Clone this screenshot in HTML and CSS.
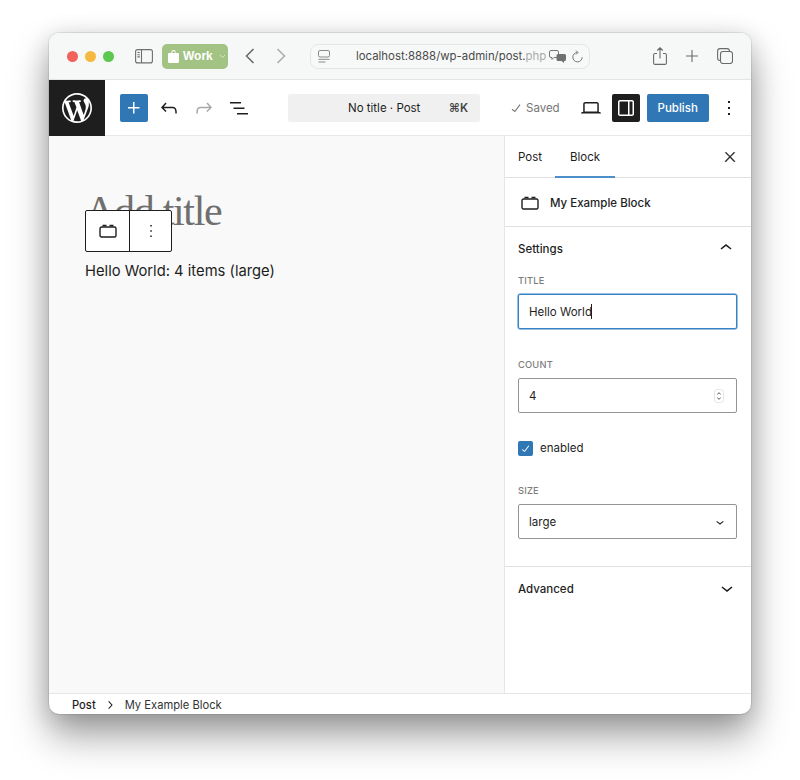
FILE: index.html
```html
<!doctype html>
<html>
<head>
<meta charset="utf-8">
<title>Edit Post</title>
<link rel="stylesheet" href="styles.css">
</head>
<body>
<div id="wrap">
	<div class="chrome">
		<div class="lights"><i class="red"></i><i class="yellow"></i><i class="green"></i></div>
		<svg class="ic-sidebar" width="18" height="15" viewBox="0 0 18 15" fill="none" stroke="#6e6e6e" stroke-width="1.1"><rect x=".6" y=".6" width="16.8" height="13.3" rx="2"/><path d="M6.5.6v13.3M2.4 3.5h2.4M2.4 5.7h2.4M2.4 7.9h2.4"/></svg>
		<div class="work">
			<svg width="11" height="13" viewBox="0 0 11 13"><path d="M3.4 3V2a2.1 2.1 0 014.2 0v1H10a1 1 0 011 1v7.5a1.5 1.5 0 01-1.5 1.5h-8A1.5 1.5 0 010 11.500V4a1 1 0 011-1zm1-.1h2.200V2a1.100 1.100 0 00-2.200 0z" fill="#fff"/></svg>
			<span>Work</span>
			<svg width="7" height="5" viewBox="0 0 7 5" fill="none" stroke="#d5e4c6" stroke-width="1"><path d="M1 1l2.500 2.500L6 1"/></svg>
		</div>
		<svg class="ic-back" width="10" height="16" viewBox="0 0 10 16" fill="none" stroke="#666" stroke-width="1.500"><path d="M8.500 1L1.500 8l7 7"/></svg>
		<svg class="ic-fwd" width="10" height="16" viewBox="0 0 10 16" fill="none" stroke="#a9aaaa" stroke-width="1.500"><path d="M1.500 1l7 7-7 7"/></svg>
		<div class="urlbar">
			<svg width="12" height="13" viewBox="0 0 12 13" fill="none" stroke="#8a8a8a" stroke-width="1"><rect x=".5" y=".5" width="11" height="6.500" rx="1.500"/><path d="M.5 9.300h11M.5 12h7"/></svg>
			<span class="url">localhost:8888/wp-admin/post.<em>php</em></span>
			<svg class="ic-translate" width="17" height="13" viewBox="0 0 17 13"><path d="M2 .5h6a1.500 1.500 0 011.500 1.500v4A1.500 1.500 0 018 7.500H5L3 9.500v-2H2A1.500 1.500 0 01.5 6V2A1.500 1.500 0 012 .5z" fill="none" stroke="#777"/><path d="M9 4h6.500A1.500 1.500 0 0117 5.500v4a1.500 1.500 0 01-1.500 1.500H15v2l-2.500-2H9a1.500 1.500 0 01-1.500-1.500v-4A1.500 1.500 0 019 4z" fill="#6f7070"/></svg>
			<svg width="12" height="13" viewBox="0 0 12 13" fill="none" stroke="#777" stroke-width="1"><path d="M6.500 2.500a4.700 4.700 0 104.700 4.700M5 .5l2 2-2 2"/></svg>
		</div>
		<div class="chrome-right">
			<svg width="14" height="18" viewBox="0 0 14 18" fill="none" stroke="#6a6a6a" stroke-width="1.100"><path d="M4 6.500H2A1.500 1.500 0 00.6 8v8A1.500 1.500 0 002 17.400h10a1.500 1.500 0 001.400-1.400V8A1.500 1.500 0 0012 6.500h-2M7 11.500V1M4.200 3.500L7 .8l2.800 2.700"/></svg>
			<svg width="12" height="12" viewBox="0 0 12 12" fill="none" stroke="#6a6a6a" stroke-width="1.100"><path d="M6 0v12M0 6h12"/></svg>
			<svg width="16" height="16" viewBox="0 0 16 16" fill="none" stroke="#6a6a6a" stroke-width="1.100"><rect x="3.500" y="3.500" width="12" height="12" rx="2.500"/><path d="M12.500 3.500V3A2.500 2.500 0 0010 .6H3A2.500 2.500 0 00.6 3v7A2.500 2.500 0 003 12.500h.5"/></svg>
		</div>
	</div>
	<div class="toolbar">
		<div class="wp-logo">
			<svg width="36" height="36" viewBox="-2 -2 24 24" fill="#fff"><path d="M20 10c0-5.510-4.490-10-10-10C4.480 0 0 4.490 0 10c0 5.520 4.480 10 10 10 5.510 0 10-4.480 10-10zM7.780 15.370L4.370 6.220c.55-.02 1.170-.08 1.170-.08.5-.06.44-1.130-.06-1.110 0 0-1.450.11-2.370.11-.18 0-.37 0-.58-.01C4.120 2.690 6.870 1.110 10 1.110c2.330 0 4.450.87 6.050 2.340-.68-.11-1.650.39-1.650 1.580 0 .74.45 1.360.9 2.100.35.61.55 1.360.55 2.460 0 1.490-1.400 5-1.400 5l-3.030-8.370c.54-.02.82-.17.82-.17.5-.05.44-1.250-.06-1.220 0 0-1.440.12-2.380.12-.87 0-2.330-.12-2.330-.12-.5-.03-.56 1.200-.06 1.220l.92.08 1.260 3.410zM17.410 10c.24-.64.74-1.870.43-4.250.7 1.290 1.050 2.710 1.050 4.250 0 3.290-1.730 6.240-4.400 7.780.97-2.590 1.940-5.200 2.920-7.780zM6.100 18.090C3.120 16.650 1.110 13.530 1.110 10c0-1.300.23-2.480.72-3.590C3.250 10.300 4.670 14.200 6.100 18.090zm4.030-6.630l2.580 6.980c-.86.29-1.760.45-2.710.45-.79 0-1.570-.11-2.290-.33.81-2.380 1.620-4.740 2.420-7.100z"/></svg>
		</div>
		<div class="tools-left">
			<button class="btn-add"><svg width="24" height="24" viewBox="0 0 24 24" fill="#fff"><path d="M11 12.500V17.500H12.500V12.500H17.500V11H12.500V6H11V11H6V12.500H11Z"/></svg></button>
			<svg width="24" height="24" viewBox="0 0 24 24" fill="#1e1e1e"><path d="M18.300 11.700c-.6-.6-1.400-.9-2.300-.9H6.700l2.900-3.300-1.100-1-4.500 5L8.500 16l1-1-2.700-2.700H16c.5 0 .9.2 1.300.5 1 1 1 3.400 1 4.500v.3h1.500v-.2c0-1.500 0-4.300-1.500-5.700z"/></svg>
			<svg width="24" height="24" viewBox="0 0 24 24" fill="#a7a7a7"><path d="M15.600 6.500l-1.100 1 2.900 3.300H8c-.9 0-1.700.3-2.300.9-1.400 1.500-1.400 4.200-1.400 5.600v.2h1.500v-.3c0-1.100 0-3.500 1-4.500.3-.3.7-.5 1.300-.5h9.200L14.300 15l1.100 1.100 4.600-4.600-4.400-5z"/></svg>
			<svg width="24" height="24" viewBox="0 0 24 24" fill="#1e1e1e"><path d="M3 6h11v1.500H3V6zm3.500 5.500h11V13h-11v-1.500zM21 17H10v1.500h11V17z"/></svg>
		</div>
		<div class="command"><span class="command-title">No title · Post</span><span class="command-key">⌘K</span></div>
		<div class="saved">
			<svg width="18" height="18" viewBox="0 0 24 24" fill="#757575"><path d="M16.700 7.100l-6.300 8.500-3.300-2.500-.9 1.200 4.500 3.400L17.900 8z"/></svg>
			<span>Saved</span>
		</div>
		<svg class="ic-device" width="24" height="24" viewBox="0 0 24 24" fill="#1e1e1e"><path d="M20.500 16h-.7V8c0-1.100-.9-2-2-2H6.200c-1.100 0-2 .9-2 2v8h-.7c-.8 0-1.500.7-1.500 1.500h20c0-.8-.7-1.500-1.500-1.500zM5.700 8c0-.3.2-.5.5-.5h11.600c.3 0 .5.2.5.5v7.600H5.700V8z"/></svg>
		<button class="btn-drawer"><svg width="24" height="24" viewBox="0 0 24 24" fill="#fff"><path d="M18 4H6c-1.100 0-2 .9-2 2v12c0 1.100.9 2 2 2h12c1.100 0 2-.9 2-2V6c0-1.100-.9-2-2-2zM6 18.500a.5.500 0 01-.5-.5V6a.5.500 0 01.5-.5h8v13H6zm12.500-.5a.5.500 0 01-.5.500h-2.500v-13H18a.5.500 0 01.5.500v12z"/></svg></button>
		<button class="btn-publish">Publish</button>
		<svg class="ic-kebab" width="24" height="24" viewBox="0 0 24 24" fill="#1e1e1e"><path d="M13 19h-2v-2h2v2zm0-6h-2v-2h2v2zm0-6h-2V5h2v2z"/></svg>
	</div>
	<div class="main">
		<div class="canvas">
			<div class="post-title">Add title</div>
			<p class="post-line">Hello World: 4 items (large)</p>
			<div class="block-tools">
				<div class="block-tool"><svg width="18" height="14" viewBox="0 0 18 14" fill="none" stroke="#1e1e1e" stroke-width="1.400"><path d="M2.500 3h13A1.500 1.500 0 0117 4.500v7a1.500 1.500 0 01-1.500 1.500h-13A1.500 1.500 0 011 11.500v-7A1.500 1.500 0 012.500 3z"/><path d="M3.500 1.500h4M10.500 1.500h4"/></svg></div>
				<div class="block-tool"><svg width="24" height="24" viewBox="0 0 24 24" fill="#1e1e1e"><path d="M12.800 18h-1.500v-1.500h1.500V18zm0-5.300h-1.500v-1.500h1.500v1.500zm0-5.200h-1.500V6h1.500v1.500z"/></svg></div>
			</div>
		</div>
		<div class="sidebar">
			<div class="tabs">
				<span class="tab">Post</span>
				<span class="tab on">Block</span>
				<svg class="ic-close" width="16" height="16" viewBox="0 0 24 24" fill="#1e1e1e" stroke="#1e1e1e" stroke-width=".6"><path d="M13 11.800l6.100-6.300-1-1-6.100 6.200-6.100-6.200-1 1 6.100 6.300-6.500 6.700 1 1 6.500-6.600 6.500 6.600 1-1z"/></svg>
			</div>
			<div class="block-card">
				<svg width="18" height="14" viewBox="0 0 18 14" fill="none" stroke="#1e1e1e" stroke-width="1.400"><path d="M2.500 3h13A1.500 1.500 0 0117 4.500v7a1.500 1.500 0 01-1.500 1.500h-13A1.500 1.500 0 011 11.500v-7A1.500 1.500 0 012.500 3z"/><path d="M3.500 1.500h4M10.500 1.500h4"/></svg>
				<span>My Example Block</span>
			</div>
			<div class="panel">
				<div class="panel-head">
					<span>Settings</span>
					<svg width="24" height="24" viewBox="0 0 24 24" fill="#1e1e1e"><path d="M6.500 12.400L12 8l5.500 4.400-.9 1.200L12 10l-4.500 3.600-1-1.200z"/></svg>
				</div>
				<label class="label">TITLE</label>
				<div class="field focus">Hello World<i class="caret"></i></div>
				<label class="label">COUNT</label>
				<div class="field">4<svg class="spin" width="10" height="14" viewBox="0 0 10 14" fill="none" stroke="#555" stroke-width="1"><rect x=".5" y=".5" width="9" height="13" rx="3" stroke="#e4e4e4"/><path d="M3.300 5.300L5 3.700l1.700 1.600M3.300 8.700L5 10.300l1.700-1.600"/></svg></div>
				<div class="check">
					<i class="box"><svg width="15" height="15" viewBox="0 0 24 24" fill="#fff"><path d="M16.700 7.100l-6.300 8.500-3.300-2.500-.9 1.200 4.500 3.400L17.900 8z"/></svg></i>
					<span>enabled</span>
				</div>
				<label class="label">SIZE</label>
				<div class="field">large<svg class="arrow" width="16" height="16" viewBox="0 0 24 24" fill="#1e1e1e"><path d="M17.500 11.600L12 16l-5.500-4.400.9-1.200L12 14l4.500-3.600 1 1.200z"/></svg></div>
			</div>
			<div class="panel-head advanced">
				<span>Advanced</span>
				<svg width="24" height="24" viewBox="0 0 24 24" fill="#1e1e1e"><path d="M17.500 11.600L12 16l-5.500-4.400.9-1.200L12 14l4.500-3.600 1 1.200z"/></svg>
			</div>
		</div>
	</div>
	<div class="footer">
		<span class="crumb">Post</span>
		<svg width="16" height="16" viewBox="0 0 24 24" fill="#1e1e1e"><path d="M10.600 6L9.400 7l4.600 5-4.600 5 1.200 1 5.400-6z"/></svg>
		<span class="crumb last">My Example Block</span>
	</div>
</div>
</body>
</html>
```

FILE: styles.css
```css
*{box-sizing: border-box;}
html,body{margin: 0; padding: 0; background: #fff;}
body{
	height: 780px;
	overflow: hidden;
	padding: 33px 49px 0;
	font-family: Inter, "Liberation Sans", sans-serif;
	font-size: 11.5px;
	color: #1e1e1e;
}
button{border: 0; padding: 0; display: flex; align-items: center; justify-content: center; font-family: inherit;}
svg{display: block; flex: none;}
#wrap{
	width: 702px;
	height: 681px;
	border-radius: 10px;
	overflow: hidden;
	display: flex;
	flex-direction: column;
	background: #fff;
	box-shadow: 0 0 0 1px rgba(0,0,0,.08), 0 22px 38px rgba(0,0,0,.36), 0 4px 24px rgba(0,0,0,.16);
}

/* browser bar */
.chrome{
	height: 47px;
	flex: none;
	display: flex;
	align-items: center;
	padding-left: 18px;
	background: #f6f8f7;
	border-bottom: 1px solid #e3e4e4;
}
.lights{display: flex; gap: 7px; margin-right: 21px;}
.lights i{display: block; width: 11px; height: 11px; border-radius: 50%;}
.red{background: #f0625a;}
.yellow{background: #f6b83f;}
.green{background: #5dc84f;}
.work{
	width: 66px;
	height: 25px;
	margin-left: 9px;
	display: flex;
	align-items: center;
	padding-left: 6px;
	border-radius: 5px;
	background: #a3c384;
	color: #fff;
	font-family: "Liberation Sans", sans-serif;
	font-size: 12px;
	font-weight: bold;
}
.work span{margin: 0 6px 0 4px;}
.ic-back{margin-left: 17px;}
.ic-fwd{margin-left: 21px;}
.urlbar{
	width: 280px;
	height: 25px;
	margin-left: 24px;
	display: flex;
	align-items: center;
	padding: 0 4px 0 7px;
	border: 1px solid #e4e6e5;
	border-radius: 8px;
	background: #f7f9f8;
	color: #4a4a4a;
}
.url{margin-left: 26px; width: 190px; white-space: nowrap; font-size: 11.4px;}
.url em{font-style: normal; color: #aaa;}
.ic-translate{margin: 0 5px 0 3px;}
.chrome-right{display: flex; align-items: center; gap: 19px; margin-left: 63px;}

/* editor toolbar */
.toolbar{
	height: 56px;
	flex: none;
	display: flex;
	align-items: flex-start;
	border-bottom: 1px solid #e8e8e8;
}
.toolbar > *{margin-top: 14px;}
.wp-logo{
	width: 56px;
	height: 56px;
	margin-top: 0;
	display: flex;
	align-items: center;
	justify-content: center;
	background: #1e1e1e;
}
.tools-left{display: flex; align-items: center; gap: 11px; margin-left: 15px;}
.btn-add{width: 28px; height: 28px; margin-right: -2px; border-radius: 2px; background: #3077b5;}
.command{
	width: 192px;
	height: 28px;
	margin-left: 37px;
	display: flex;
	align-items: center;
	justify-content: space-between;
	padding: 0 12px 0 60px;
	border-radius: 2px;
	background: #f0f0f0;
}
.command-key{font-weight: 600; color: #444;}
.saved{height: 28px; display: flex; align-items: center; gap: 1px; margin-left: 27px; color: #757575;}
.ic-device{margin-left: 19px; margin-top: 16px;}
.btn-drawer{width: 28px; height: 28px; margin-left: 9px; border-radius: 2px; background: #1e1e1e;}
.btn-publish{
	width: 62px;
	height: 28px;
	margin-left: 7px;
	border-radius: 2px;
	background: #3077b5;
	color: #fff;
	font-size: 11.5px;
	font-weight: 500;
}
.ic-kebab{margin-left: 8px; margin-top: 16px;}

/* content */
.main{flex: 1; display: flex; min-height: 0;}
.canvas{
	flex: 1;
	position: relative;
	padding: 50px 0 0 36px;
	background: #f9f9f9;
}
.post-title{
	font-family: "Liberation Serif", serif;
	font-size: 42px;
	letter-spacing: -1.3px;
	line-height: 50px;
	color: #6f6f6f;
}
.post-line{margin: 24px 0 0; font-size: 14.75px; line-height: 22px;}
.block-tools{
	position: absolute;
	left: 36px;
	top: 74px;
	width: 87px;
	height: 42px;
	display: flex;
	border: 1px solid #1e1e1e;
	border-radius: 2px;
	background: #fff;
}
.block-tool{width: 43px; display: flex; align-items: center; justify-content: center;}
.block-tool + .block-tool{flex: 1; border-left: 1px solid #1e1e1e;}

/* sidebar */
.sidebar{width: 247px; flex: none; background: #fff; border-left: 1px solid #e6e6e6;}
.tabs{
	height: 42px;
	display: flex;
	align-items: center;
	border-bottom: 1px solid #e0e0e0;
}
.tab{height: 41px; line-height: 42px; padding: 0 13px;}
.tab.on{padding: 0 15px; position: relative;}
.tab.on:after{
	content: "";
	position: absolute;
	left: 0;
	right: 0;
	bottom: -1px;
	height: 2px;
	background: #4f8fc9;
}
.ic-close{margin-left: auto; margin-right: 13px;}
.block-card{
	height: 49px;
	display: flex;
	align-items: center;
	gap: 11px;
	padding: 2px 0 0 16px;
	border-bottom: 1px solid #e0e0e0;
	font-weight: 500;
}
.panel{padding: 0 14px 0 13px; border-bottom: 1px solid #e0e0e0;}
.panel-head{
	height: 42px;
	display: flex;
	align-items: center;
	justify-content: space-between;
	font-weight: 500;
}
.panel-head span{padding-top: 2px;}
.panel-head svg{margin-right: -1px;}
.advanced{padding: 0 13px;}
.label{
	display: block;
	margin-top: 4px;
	height: 16px;
	line-height: 16px;
	font-size: 9.3px;
	font-weight: 500;
	letter-spacing: .2px;
	color: #7d7d7d;
}
.field{
	height: 35px;
	margin: 5px 0 28px;
	display: flex;
	align-items: center;
	padding: 0 10px;
	border: 1px solid #949494;
	border-radius: 2px;
	font-size: 11.5px;
}
.field:last-child{margin-bottom: 27px;}
.field.focus{border-color: #3582c4; box-shadow: 0 0 0 .5px #3582c4;}
.caret{display: block; width: 1px; height: 15px; margin-left: -1px; background: #1e1e1e;}
.spin{margin-left: auto; margin-right: 2px;}
.arrow{margin-left: auto; margin-right: -2px;}
.check{display: flex; align-items: center; gap: 7px; height: 16px; margin: -1px 0 27px;}
.box{
	width: 15px;
	height: 15px;
	border-radius: 2px;
	background: #3077b5;
}

/* footer */
.footer{
	height: 21px;
	flex: none;
	display: flex;
	align-items: center;
	gap: 6px;
	padding: 2px 0 0 23px;
	border-top: 1px solid #e6e6e6;
	font-size: 11.2px;
}
.crumb{font-weight: 500;}
.crumb.last{font-weight: 400; color: #333; margin-left: 1px;}
```
